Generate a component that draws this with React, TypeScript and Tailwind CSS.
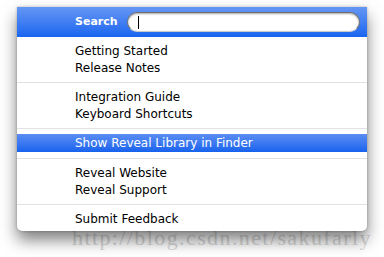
export default function App() {
  const groups = [
    ['Getting Started', 'Release Notes'],
    ['Integration Guide', 'Keyboard Shortcuts'],
    ['Show Reveal Library in Finder'],
    ['Reveal Website', 'Reveal Support'],
    ['Submit Feedback'],
  ]

  return (
    <div className="relative w-[384px] h-[257px] bg-white overflow-hidden font-['DejaVu_Sans',sans-serif]">
      {/* watermark */}
      <div className="absolute left-[72px] top-[227px] text-[22px] leading-none text-[#d9d9d9] font-['Liberation_Serif',serif] tracking-[1.4px] whitespace-nowrap">
        http://blog.csdn.net/sakufarly
      </div>

      <div className="relative ml-[17px] mt-[7px] w-[350px] bg-white rounded-b-[5px] shadow-[0_9px_16px_rgba(0,0,0,0.5),0_0_3px_rgba(0,0,0,0.25)]">
        {/* Search header */}
        <div className="h-[30px] flex items-center bg-gradient-to-b from-[#6596f3] to-[#1664f0]">
          <span className="ml-[58px] w-[52px] text-white font-bold text-[11px]">Search</span>
          <div className="h-[20px] w-[233px] bg-white rounded-full border border-[#6f6f6f] border-b-[#c8c8c8] shadow-[inset_0_1px_2px_rgba(0,0,0,0.35)] flex items-center">
            <div className="ml-[10px] w-px h-[13px] bg-black" />
          </div>
        </div>

        {/* Items */}
        <div className="pt-[5px] pb-[4px]">
          {groups.map((items, gi) => (
            <div key={gi}>
              {gi > 0 && (
                <div className="h-[12px] flex items-center">
                  <div className="w-full h-px bg-[#e2e2e2]" />
                </div>
              )}
              {items.map((item) =>
                item === 'Show Reveal Library in Finder' ? (
                  <div
                    key={item}
                    className="h-[18px] flex items-center pl-[58px] text-[12px] text-white bg-gradient-to-b from-[#5b8df2] to-[#1562ee]"
                  >
                    {item}
                  </div>
                ) : (
                  <div key={item} className="h-[17px] flex items-center pl-[58px] text-[12px] text-black">
                    {item}
                  </div>
                )
              )}
            </div>
          ))}
        </div>
      </div>
    </div>
  )
}
